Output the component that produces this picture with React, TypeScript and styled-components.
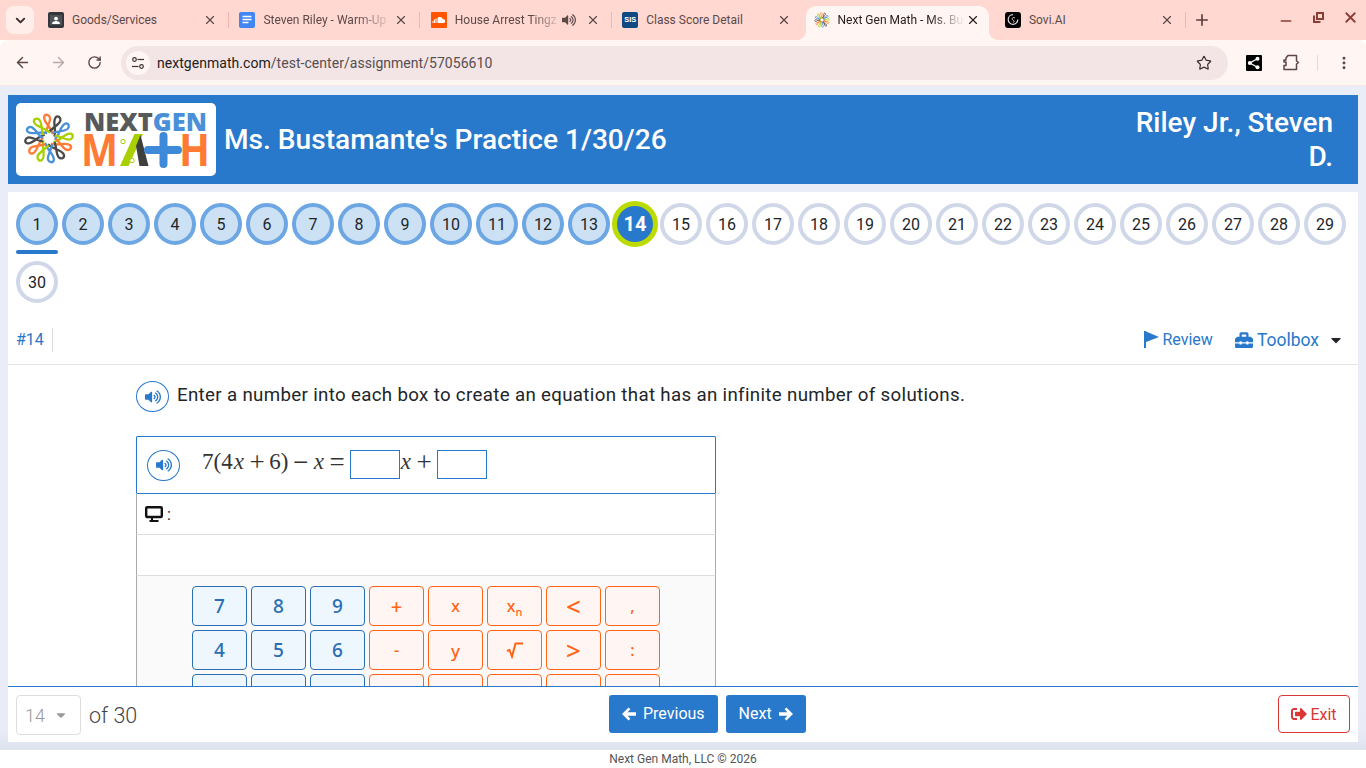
import React from "react";
import styled, { createGlobalStyle } from "styled-components";
import { FaToolbox, FaVolumeUp, FaSignOutAlt, FaCaretDown } from "react-icons/fa";
import { ArrowLeft, ArrowRight, RotateCw, Star, X, Plus, ChevronDown, MoreVertical, Minus } from "lucide-react";

const Global = createGlobalStyle`
  html, body { margin: 0; padding: 0; background: #fff; }
  body { font-family: Roboto, "Liberation Sans", sans-serif; overflow: hidden; }
  * { box-sizing: border-box; }
`;

const Root = styled.div`display:flex;flex-direction:column;width:1366px;height:768px;overflow:hidden;`;

const TabStrip = styled.div`display:flex;align-items:flex-end;height:40px;background:#ffd8d2;position:relative;flex:none;`;
const TabListButton = styled.div`
  width:28px;height:28px;margin:0 2px 6px 6px;border-radius:8px;background:#ffeeea;color:#3a2a2a;
  display:flex;align-items:center;justify-content:center;flex:none;
`;
const Tab = styled.div<{ $active?: boolean; $sep?: boolean }>`
  position:relative;height:34px;display:flex;align-items:center;flex:none;padding-bottom:6px;
  width:${p => p.$active ? "183.4px" : "191.4px"};
  margin:${p => p.$active ? "0 4px" : "0"};
  padding-left:${p => p.$active ? "8px" : "12px"};
  padding-right:${p => p.$active ? "10px" : "12px"};
  border-radius:10px 10px 0 0;background:${p => p.$active ? "#fff6f3" : "transparent"};
  color:${p => p.$active ? "#2a2020" : "#5c4947"};
  ${p => p.$sep ? `&::after{content:"";position:absolute;right:-1.5px;top:6px;height:16px;width:1px;background:#f7b5ab;}` : ""}
  ${p => p.$active ? `
    &::before{content:"";position:absolute;left:-10px;bottom:0;width:10px;height:10px;background:radial-gradient(circle at 0 0,transparent 10px,#fff6f3 10.5px);}
    &::after{content:"";position:absolute;right:-10px;bottom:0;width:10px;height:10px;background:radial-gradient(circle at 100% 0,transparent 10px,#fff6f3 10.5px);}
  ` : ""}
`;
const TabIcon = styled.div`width:16px;height:16px;flex:none;display:flex;margin-right:8px;`;
const TabTitle = styled.div<{ $fade?: boolean }>`
  flex:1;min-width:0;font-size:12px;line-height:16px;white-space:nowrap;overflow:hidden;
  ${p => p.$fade ? "-webkit-mask-image:linear-gradient(90deg,#000 72%,transparent 100%);mask-image:linear-gradient(90deg,#000 72%,transparent 100%);" : ""}
`;
const TabAudio = styled.div`width:16px;height:16px;flex:none;display:flex;align-items:center;margin:0 7px 0 0;color:#5c4947;`;
const TabClose = styled.div`width:16px;flex:none;display:flex;align-items:center;justify-content:center;margin-right:-2.5px;`;
const NewTab = styled.div`width:20px;height:20px;margin:0 0 10px 8px;display:flex;align-items:center;justify-content:center;color:#5c3d3a;flex:none;`;
const WindowControls = styled.div`
  margin-left:auto;display:flex;align-items:center;height:34px;align-self:flex-start;color:#8c3d34;flex:none;
`;
const WinBtn = styled.div<{ $shift: number }>`
  width:32px;height:34px;display:flex;align-items:center;justify-content:center;padding-top:${p => p.$shift}px;
`;

const Toolbar = styled.div`
  display:flex;align-items:center;height:46px;background:#fff6f3;border-radius:8px 8px 0 0;flex:none;padding:0 0 0 4px;
  border-bottom:1px solid #f6e6e4;color:#5c4442;
`;
const NavIcon = styled.div<{ $dim?: boolean }>`
  width:36px;height:34px;display:flex;align-items:center;justify-content:center;flex:none;color:${p => p.$dim ? "#b9a9a7" : "#5c4442"};
`;
const Address = styled.div`
  width:1107px;height:34px;margin-left:9px;border-radius:17px;background:#f3e5e6;display:flex;align-items:center;padding:0 16px 0 5px;flex:none;
`;
const SiteChip = styled.div`width:24px;height:24px;border-radius:50%;background:#fff6f3;display:flex;align-items:center;justify-content:center;flex:none;`;
const Url = styled.div`margin-left:7px;font-size:14px;color:#574e4e;flex:1;white-space:nowrap;letter-spacing:.04px;`;
const UrlHost = styled.span`color:#241c1c;`;
const ToolRight = styled.div`display:flex;align-items:center;flex:1;padding-left:18px;`;
const ToolSlot = styled.div<{ $w: number; $ml?: number }>`width:${p => p.$w}px;margin-left:${p => p.$ml || 0}px;display:flex;align-items:center;justify-content:center;flex:none;`;
const ToolDivider = styled.div`width:1px;height:16px;background:#f7d3cd;margin:0 18px 0 7px;flex:none;`;

const PageArea = styled.div`
  flex:none;height:664px;background:linear-gradient(#e9edf8,#e9ecf7 97%,#dfe3f0);padding:9px 8px 8px;display:flex;flex-direction:column;
`;
const Header = styled.header`
  height:89px;background:#2878cb;display:flex;align-items:center;padding:0 25px 0 8px;flex:none;color:#fff;margin-bottom:8px;
`;
const LogoCard = styled.div`width:200px;height:73px;background:#fff;border-radius:5px;flex:none;display:flex;`;
const Title = styled.h1`margin:0 0 0 8px;font-size:28.1px;font-weight:500;line-height:34px;white-space:nowrap;flex:1;`;
const Student = styled.div`width:215px;font-size:28px;font-weight:500;line-height:34px;text-align:right;flex:none;`;

const Panel = styled.div`flex:1;min-height:0;background:#fff;display:flex;flex-direction:column;`;
const Scroller = styled.div`flex:1;min-height:0;overflow:hidden;`;
const Bubbles = styled.div`display:flex;flex-wrap:wrap;gap:16px 4px;padding:11px 8px 13px;`;
const Bubble = styled.div<{ $state: "done" | "todo" | "current"; $under?: boolean }>`
  position:relative;width:42px;height:42px;border-radius:50%;display:flex;align-items:center;justify-content:center;
  font-size:16px;color:#212529;flex:none;border:4px solid #cfd7e9;background:#fff;
  ${p => p.$state === "done" ? "border-color:#6ca6e3;background:#cde1f5;" : ""}
  ${p => p.$state === "current" ? "width:46px;height:46px;margin:-2px;border:5px solid #bcdc00;background:#2878cb;color:#fff;font-weight:700;font-size:20px;" : ""}
  ${p => p.$under ? `&::after{content:"";position:absolute;left:-4px;right:-4px;top:43px;height:4px;border-radius:2px;background:#2878cb;}` : ""}
`;
const QBar = styled.div`height:49px;display:flex;align-items:center;padding:0 14px 1px 8px;border-bottom:1px solid #e4e4e4;`;
const QNum = styled.div`color:#2878cb;font-size:16px;line-height:24px;padding-right:8px;border-right:1px solid #dedede;`;
const QTools = styled.div`margin-left:auto;display:flex;align-items:center;color:#2878cb;`;
const Review = styled.div`display:flex;align-items:center;gap:3px;font-size:16px;`;
const Toolbox = styled.div`display:flex;align-items:center;gap:4px;font-size:17.5px;margin-left:22px;`;
const Caret = styled.div`color:#212529;display:flex;margin-left:5px;`;

const Question = styled.div`padding:16px 0 0 128px;`;
const Prompt = styled.div`display:flex;align-items:flex-start;gap:8px;margin-bottom:24px;`;
const PromptText = styled.div`font-size:18.72px;line-height:28px;color:#212529;letter-spacing:.33px;white-space:nowrap;`;
const Speaker = styled.div`
  width:33px;height:31px;border:1px solid #2878cb;border-radius:50%;display:flex;align-items:center;justify-content:center;color:#2878cb;flex:none;
`;
const Work = styled.div`width:580px;`;
const Equation = styled.div`height:58px;border:1px solid #2878cb;border-radius:1px;display:flex;align-items:center;padding:0 10px;`;
const MathLine = styled.div`
  margin:0 0 6px 22px;display:flex;align-items:center;font-family:"Liberation Serif",serif;font-size:23px;color:#333;white-space:nowrap;
`;
const Var = styled.i`margin:0 1px;`;
const Op = styled.span<{ $r?: number }>`font-size:27px;line-height:26px;margin:0 ${p => p.$r ?? 4.55}px 0 4.55px;`;
const Blank = styled.div`width:50px;height:29px;border:1px solid #2878cb;background:#fff;flex:none;margin-top:4px;`;
const ResponseRow = styled.div`
  height:41px;border:1px solid #aaa;border-top:none;border-bottom:1px solid #ddd;display:flex;align-items:center;padding:0 8px;font-size:16px;color:#222;gap:4px;
`;
const Keypad = styled.div`
  border-left:1px solid #aaa;border-right:1px solid #aaa;background:#fafafa;padding:10px 0 10px;
  display:grid;grid-template-columns:repeat(8,55px);grid-auto-rows:40px;gap:4px;justify-content:center;
`;
const Key = styled.div<{ $kind: "num" | "sym"; $size?: number }>`
  border-radius:4px;display:flex;align-items:center;justify-content:center;font-family:"Noto Sans",sans-serif;
  font-size:${p => p.$size ?? (p.$kind === "num" ? 19 : 16)}px;font-weight:500;
  ${p => p.$kind === "num"
    ? "border:1px solid #2a6fb5;background:#eef6fe;color:#2a6fb5;"
    : "border:1px solid #ff6314;background:#fff6f3;color:#ff6314;"}
`;
const KeyLabel = styled.span`display:block;`;
const Sub = styled.sub`font-size:11px;vertical-align:-4px;line-height:0;`;

const Footer = styled.footer`height:56px;flex:none;border-top:1.5px solid #2878cb;display:flex;align-items:flex-start;padding:8px 8px 0;position:relative;`;
const SelectBox = styled.div`
  width:65px;height:40px;border:1px solid #ddd;border-radius:4px;display:flex;align-items:center;padding:0 0 0 8px;color:#999;font-size:18px;font-weight:300;gap:9px;
`;
const OfText = styled.div`font-size:21.5px;font-weight:300;color:#444;margin:8px 0 0 8px;`;
const Center = styled.div`position:absolute;left:601px;top:8px;display:flex;gap:8px;`;
const Btn = styled.div`
  height:38px;background:#2878cb;color:#fff;border-radius:3px;display:flex;align-items:center;justify-content:center;gap:7px;font-size:16px;padding:0 13px 1px;
`;
const ExitBtn = styled.div`
  margin-left:auto;height:38px;width:72px;border:1px solid #dc3535;border-radius:4px;color:#dc3535;display:flex;align-items:center;justify-content:center;gap:3px;font-size:16px;
`;
const Credit = styled.div`height:18px;flex:none;text-align:center;font-size:12px;line-height:18px;color:#555;background:#fff;`;

const PETAL = ["#ff7a33", "#4a4a4a", "#4a90d9", "#a8d000"];
const Petals = () => (
  <>
    {Array.from({ length: 12 }).map((_, i) => (
      <path key={i} transform={`rotate(${i * 30})`} d="M3.500 -5.500C2 -12 -6 -17 -5 -22.500C-4 -26 0 -25 1 -22C2 -18 -1.500 -14 -3 -7"
        stroke={PETAL[i % 4]} strokeWidth="2.4" strokeLinecap="round" fill="none" />
    ))}
  </>
);
const SmallFlower = () => (
  <svg width="16" height="16" viewBox="-27 -27 54 54"><Petals /></svg>
);

const logoFont = "'Open Sans',sans-serif";
const Logo = () => (
  <svg width="200" height="73" viewBox="0 0 200 73">
    <g transform="translate(33,35.500) scale(.96)"><Petals /></g>
    <text x="68" y="28" fontFamily={logoFont} fontWeight="800" fontSize="25" textLength="123" lengthAdjust="spacingAndGlyphs">
      <tspan fill="#58595b">NEXT</tspan><tspan fill="#4a90d9">GEN</tspan>
    </text>
    <text x="65" y="63" fontFamily={logoFont} fontWeight="700" fontSize="45" fill="#ff7a33" textLength="37" lengthAdjust="spacingAndGlyphs">M</text>
    <path d="M104 63H112.500L127 31H118.500Z" fill="#a8d000" />
    <path d="M124.500 32L132.500 63H123.500L120 43Z" fill="#3f3f3f" />
    <circle cx="107" cy="38.500" r="2.200" fill="#fff" stroke="#a8d000" />
    <circle cx="116" cy="57.500" r="2.200" fill="#fff" stroke="#a8d000" />
    <path d="M132 47H162M147.500 33V61" stroke="#3f8ad8" strokeWidth="8" strokeLinecap="round" fill="none" />
    <text x="163" y="63" fontFamily={logoFont} fontWeight="700" fontSize="45" fill="#ff7a33" textLength="31" lengthAdjust="spacingAndGlyphs">H</text>
  </svg>
);

const Classroom = () => (
  <svg width="16" height="16" viewBox="0 0 16 16"><rect width="16" height="16" rx="2" fill="#33373b" /><rect x="2" y="3" width="12" height="10" fill="#4f5357" /><circle cx="8" cy="6.600" r="1.900" fill="#fff" /><path d="M4 12c0-2.200 2-3 4-3s4 .8 4 3Z" fill="#fff" /></svg>
);
const Docs = () => (
  <svg width="16" height="16" viewBox="0 0 16 16"><rect width="16" height="16" rx="2" fill="#4285f4" /><path d="M3.500 4.500h9M3.500 7.500h9M3.500 10.500h6" stroke="#fff" strokeWidth="1.500" /></svg>
);
const Soundcloud = () => (
  <svg width="16" height="16" viewBox="0 0 16 16"><rect width="16" height="16" rx="1" fill="#ff5500" /><path d="M6.500 11V6.200C7 5.600 8 5 9 5c1.500 0 2.600 1 2.900 2.300 1.300-.2 2.300.7 2.300 1.900 0 1-.8 1.800-1.900 1.800Z" fill="#fff" /><path d="M2 9v2M3.500 7.500V11M5 6.500V11" stroke="#fff" /></svg>
);
const SisIcon = styled.div`width:16px;height:16px;border-radius:2px;background:#0f4a82;color:#fff;font:700 7.5px/16px "Liberation Sans",sans-serif;text-align:center;`;
const Sovi = () => (
  <svg width="16" height="16" viewBox="0 0 16 16" fill="none"><rect width="16" height="16" rx="3" fill="#000" /><circle cx="8" cy="7.500" r="4.800" stroke="#ddd" strokeWidth="1.200" strokeDasharray="22 8" /><path d="M10 6C8.500 5 6.500 6 7.500 7.500S10 9 8.500 10.500" stroke="#ddd" strokeWidth="1" /></svg>
);

const TabItem: React.FC<{ icon: React.ReactNode; title: string; sep?: boolean; active?: boolean; fade?: boolean; audio?: boolean }> = ({ icon, title, sep, active, fade, audio }) => (
  <Tab $sep={sep} $active={active}>
    <TabIcon>{icon}</TabIcon>
    <TabTitle $fade={fade}>{title}</TabTitle>
    {audio && <TabAudio><FaVolumeUp size={14} /></TabAudio>}
    <TabClose><X size={14} strokeWidth={2} color={active ? "#2a2020" : "#5c4947"} /></TabClose>
  </Tab>
);

const SiteTune = () => (
  <svg width="14" height="14" viewBox="0 0 14 14" fill="none" stroke="#3c3030" strokeWidth="1.200"><circle cx="3.500" cy="3.500" r="1.800" /><path d="M6.500 3.500H13" /><circle cx="10.500" cy="10.500" r="1.800" /><path d="M1 10.500H7.500" /></svg>
);
const Share = () => (
  <svg width="16" height="16" viewBox="0 0 16 16"><rect width="16" height="16" rx="1" fill="#000" /><circle cx="11.500" cy="3.800" r="2" fill="#fff" /><circle cx="3.800" cy="8" r="2" fill="#fff" /><circle cx="11.500" cy="12.200" r="2" fill="#fff" /><path d="M11.500 3.800L3.800 8L11.500 12.200" stroke="#fff" strokeWidth="1.300" fill="none" /></svg>
);
const Puzzle = () => (
  <svg width="18" height="18" viewBox="0 0 18 18" fill="none" stroke="#5c4442" strokeWidth="1.500" strokeLinejoin="round"><path d="M2 6H4V4L6 1.500H14.500V7L16.500 8.500L14.500 10V15.500H2V11.500H4V8H2Z" /></svg>
);
const Restore = () => (
  <svg width="11" height="11" viewBox="0 0 11 11" fill="none" stroke="currentColor" strokeWidth="2"><rect x="4" y="1" width="6" height="6" /><path d="M1 3.500V10H7.500" /></svg>
);
const Pennant = () => (
  <svg width="15" height="17" viewBox="0 0 15 17" fill="#2878cb"><rect x="0" y="0" width="2" height="17" /><path d="M2 0.500L15 6L2 11Z" /></svg>
);
const Monitor = () => (
  <svg width="18" height="16" viewBox="0 0 18 16" fill="none"><rect x="1.200" y="1.200" width="15.600" height="9.800" rx="1" stroke="#111" strokeWidth="2.400" /><path d="M7 12V14M4.500 15H13.500" stroke="#111" strokeWidth="2" /></svg>
);
const FatArrow: React.FC<{ flip?: boolean }> = ({ flip }) => (
  <svg width="14" height="14" viewBox="0 0 15 14" fill="#fff" transform={flip ? "scale(-1,1)" : undefined}><path d="M8 0L15 7L8 14L6 12L9 9H0V5H9L6 2Z" /></svg>
);
const Radical = () => (
  <svg width="18" height="18" viewBox="0 0 18 18" fill="none" stroke="#ff6314" strokeWidth="2"><path d="M1 10L3.500 9L6 15.500L9.500 2.500H17" /></svg>
);

const total = Array.from({ length: 30 }, (_, i) => i + 1);

export default function App() {
  return (
    <Root>
      <Global />
      <TabStrip>
        <TabListButton><ChevronDown size={15} strokeWidth={3} /></TabListButton>
        <TabItem icon={<Classroom />} title="Goods/Services" sep />
        <TabItem icon={<Docs />} title="Steven Riley - Warm-Up" sep fade />
        <TabItem icon={<Soundcloud />} title="House Arrest Tingz" sep fade audio />
        <TabItem icon={<SisIcon>SIS</SisIcon>} title="Class Score Detail" />
        <TabItem icon={<SmallFlower />} title="Next Gen Math - Ms. Bustamante" active fade />
        <TabItem icon={<Sovi />} title="Sovi.AI" sep />
        <NewTab><Plus size={18} strokeWidth={2.2} /></NewTab>
        <WindowControls>
          <WinBtn $shift={8}><Minus size={16} strokeWidth={2.4} /></WinBtn>
          <WinBtn $shift={0}><Restore /></WinBtn>
          <WinBtn $shift={0}><X size={17} strokeWidth={2.6} /></WinBtn>
        </WindowControls>
      </TabStrip>
      <Toolbar>
        <NavIcon><ArrowLeft size={17} strokeWidth={2} /></NavIcon>
        <NavIcon $dim><ArrowRight size={17} strokeWidth={2} /></NavIcon>
        <NavIcon><RotateCw size={15} strokeWidth={2.2} /></NavIcon>
        <Address>
          <SiteChip><SiteTune /></SiteChip>
          <Url><UrlHost>nextgenmath.com</UrlHost>/test-center/assignment/57056610</Url>
          <Star size={16} strokeWidth={1.8} color="#3c3030" />
        </Address>
        <ToolRight>
          <ToolSlot $w={16}><Share /></ToolSlot>
          <ToolSlot $w={38} $ml={10}><Puzzle /></ToolSlot>
          <ToolDivider />
          <ToolSlot $w={16}><MoreVertical size={16} strokeWidth={2.4} /></ToolSlot>
        </ToolRight>
      </Toolbar>
      <PageArea>
        <Header>
          <LogoCard><Logo /></LogoCard>
          <Title>Ms. Bustamante's Practice 1/30/26</Title>
          <Student>Riley Jr., Steven D.</Student>
        </Header>
        <Panel>
          <Scroller>
            <Bubbles>
              {total.map(n => (
                <Bubble key={n} $state={n === 14 ? "current" : n < 14 ? "done" : "todo"} $under={n === 1}>{n}</Bubble>
              ))}
            </Bubbles>
            <QBar>
              <QNum>#14</QNum>
              <QTools>
                <Review><Pennant />Review</Review>
                <Toolbox><FaToolbox size={18} />Toolbox<Caret><FaCaretDown size={16} /></Caret></Toolbox>
              </QTools>
            </QBar>
            <Question>
              <Prompt>
                <Speaker><FaVolumeUp size={16} /></Speaker>
                <PromptText>Enter a number into each box to create an equation that has an infinite number of solutions.</PromptText>
              </Prompt>
              <Work>
                <Equation>
                  <Speaker><FaVolumeUp size={16} /></Speaker>
                  <MathLine>
                    7(4<Var>x</Var><Op>+</Op>6)<Op>−</Op><Var>x</Var><Op $r={5}>=</Op>
                    <Blank /><Var>x</Var><Op $r={5.5}>+</Op><Blank />
                  </MathLine>
                </Equation>
                <ResponseRow><Monitor /> :</ResponseRow>
                <ResponseRow />
                <Keypad>
                  <Key $kind="num">7</Key><Key $kind="num">8</Key><Key $kind="num">9</Key>
                  <Key $kind="sym" $size={20}>+</Key><Key $kind="sym">x</Key><Key $kind="sym"><KeyLabel>x<Sub>n</Sub></KeyLabel></Key><Key $kind="sym" $size={26}>&lt;</Key><Key $kind="sym">,</Key>
                  <Key $kind="num">4</Key><Key $kind="num">5</Key><Key $kind="num">6</Key>
                  <Key $kind="sym">-</Key><Key $kind="sym" $size={17}>y</Key><Key $kind="sym"><Radical /></Key><Key $kind="sym" $size={26}>&gt;</Key><Key $kind="sym">:</Key>
                  <Key $kind="num" /><Key $kind="num" /><Key $kind="num" />
                  <Key $kind="sym" /><Key $kind="sym" /><Key $kind="sym" /><Key $kind="sym" /><Key $kind="sym" />
                </Keypad>
              </Work>
            </Question>
          </Scroller>
          <Footer>
            <SelectBox>14<FaCaretDown size={14} color="#999" /></SelectBox>
            <OfText>of 30</OfText>
            <Center>
              <Btn><FatArrow flip />Previous</Btn>
              <Btn>Next<FatArrow /></Btn>
            </Center>
            <ExitBtn><FaSignOutAlt size={16} />Exit</ExitBtn>
          </Footer>
        </Panel>
      </PageArea>
      <Credit>Next Gen Math, LLC © 2026</Credit>
    </Root>
  );
}
